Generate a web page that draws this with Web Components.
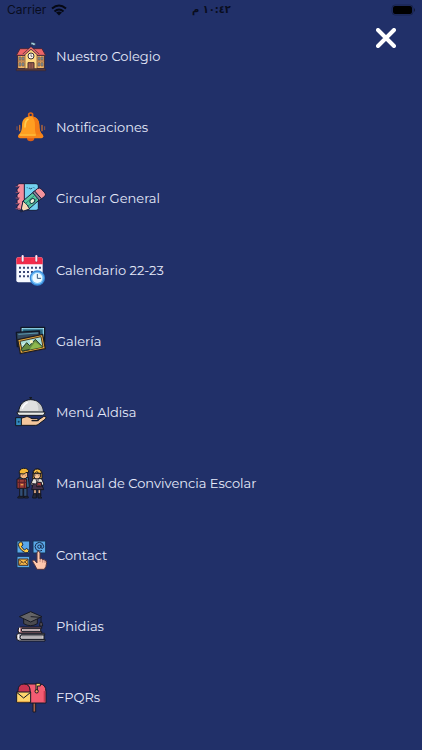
<!DOCTYPE html>
<html lang="es">
<head>
<meta charset="utf-8">
<meta name="viewport" content="width=device-width, initial-scale=1">
<title>Menú</title>
<style>
  body {
    margin: 0;
    background: #213069;
    color: #e6eafa;
    font-family: Montserrat, Inter, "DejaVu Sans", sans-serif;
  }
</style>
</head>
<body>
<side-menu>
  <status-bar slot="status" carrier="Carrier" time="١٠:٤٢ م"></status-bar>
  <menu-item icon="school">Nuestro Colegio</menu-item>
  <menu-item icon="bell">Notificaciones</menu-item>
  <menu-item icon="notebook">Circular General</menu-item>
  <menu-item icon="calendar">Calendario 22-23</menu-item>
  <menu-item icon="gallery">Galería</menu-item>
  <menu-item icon="food">Menú Aldisa</menu-item>
  <menu-item icon="students">Manual de Convivencia Escolar</menu-item>
  <menu-item icon="contact">Contact</menu-item>
  <menu-item icon="books">Phidias</menu-item>
  <menu-item icon="mailbox">FPQRs</menu-item>
</side-menu>

<script>
// every icon is drawn on a 96 x 96 grid
const icons = {
  school: `
    <path d="M48 27V7" stroke="#26283c" stroke-width="2"/>
    <path d="M48 7h6l2 2h5v7h-6l-2-2h-5z" fill="#a5d5e4" stroke="#26344f" stroke-width="2"/>
    <path d="M8 45h80v41H8z" fill="#efb568" stroke="#3b2836" stroke-width="3"/>
    <path d="M15 26h66l11 20H4z" fill="#ee6668" stroke="#46283a" stroke-width="3"/>
    <path d="M30 86V43l18-15 18 15v43z" fill="#ffd982" stroke="#5b3c35" stroke-width="2"/>
    <path d="M25 44l23-20 23 20" fill="none" stroke="#3d2737" stroke-width="7"/>
    <path d="M25 44l23-20 23 20" fill="none" stroke="#f17370" stroke-width="4"/>
    <circle cx="48" cy="48" r="9" fill="#fff8eb" stroke="#35303c" stroke-width="3"/>
    <path d="M48 43v6h4" fill="none" stroke="#35303c" stroke-width="2"/>
    <path d="M39 86V68h18v18" fill="#9b5d4f" stroke="#492c32" stroke-width="3"/>
    <path d="M48 69v16" stroke="#5d3938" stroke-width="2"/>
    <g fill="#799aa5" stroke="#7d5945" stroke-width="2">
      <path d="M12 51h6v9h-6zM21 51h6v9h-6zM12 68h6v10h-6zM21 68h6v10h-6zM69 51h6v9h-6zM78 51h6v9h-6zM69 68h6v10h-6zM78 68h6v10h-6z"/>
    </g>
    <path d="M9 63h20M67 63h20" stroke="#9c6549" stroke-width="3"/>
    <path d="M4 87h88v5H4z" fill="#68413d" stroke="#302434" stroke-width="2"/>`,
  bell: `
    <circle cx="47" cy="12" r="6" fill="none" stroke="#df6815" stroke-width="5"/>
    <path d="M36 81a11 10 0 0 0 22 0z" fill="#dc5e15"/>
    <path d="M47 16c-17 0-26 11-26 27 0 15-3 21-10 29h72c-7-8-10-14-10-29 0-16-9-27-26-27z" fill="#ff9e21"/>
    <path d="M50 16c14 2 23 12 23 27 0 15 3 21 10 29H64c-5-9-4-19-4-29 0-13-3-21-10-27z" fill="#f37b17"/>
    <path d="M39 25c-7 4-9 12-9 23" fill="none" stroke="#ffcc50" stroke-width="5" stroke-linecap="round"/>
    <rect x="9" y="70" width="76" height="12" rx="6" fill="#f78519"/>
    <path d="M15 72h46" stroke="#ffc13d" stroke-width="4" stroke-linecap="round"/>
    <path d="M14 43v16M81 43v16" stroke="#c36d34" stroke-width="4" stroke-linecap="round"/>
    <path d="M6 47v9M89 47v9" stroke="#8c5549" stroke-width="3" stroke-linecap="round"/>`,
  notebook: `
    <g stroke="#171d3e" stroke-width="3" stroke-linejoin="round">
      <path d="M24 5h39q7 0 7 7v67q0 6-7 6H24z" fill="#73d2f1"/>
      <path d="M11 5h17v79H11q-5 0-5-7v-5l6-5-6-5v-7l6-5-6-5v-7l6-5-6-5v-7l6-5-6-5z" fill="#f48c9b"/>
      <path d="M24 57l35-30 19 22-35 31-24 8z" fill="#58c7a0"/>
      <path d="M24 57l-7 33 27-9-7-12z" fill="#f6d6b3"/>
      <path d="M58 28l9-8q6-4 12 1l11 12q4 6-1 10l-10 8z" fill="#f3929c"/>
      <path d="M53 32l6-5 20 23-6 5z" fill="#8b8094"/>
    </g>
    <path d="M31 65l28-25M38 73l29-24" stroke="#258b76" stroke-width="3"/>
    <ellipse cx="52" cy="57" rx="8" ry="6" fill="#eff7de" stroke="#173947" stroke-width="3" transform="rotate(-40 52 57)"/>
    <path d="M19 79l-2 11 9-3z" fill="#182143"/>
    <path d="M37 17l1 1M57 17l1 1M43 19q4 4 8 0" fill="none" stroke="#274f70" stroke-width="3" stroke-linecap="round"/>
    <path d="M2 14h13M2 31h13M2 48h13M2 65h13M2 80h13" stroke="#9d5068" stroke-width="3"/>`,
  calendar: `
    <rect x="4" y="10" width="79" height="75" rx="6" fill="#f7f9ff"/>
    <path d="M10 10h67q6 0 6 7v14H4V17q0-7 6-7z" fill="#f22c4b"/>
    <path d="M23 8v13M64 8v13" stroke="#c22345" stroke-width="9" stroke-linecap="round"/>
    <path d="M23 6v14M64 6v14" stroke="#edf0ff" stroke-width="6" stroke-linecap="round"/>
    <g fill="#3a4776">
      <path d="M12 38h6v6h-6zM24 38h6v6h-6zM36 38h6v6h-6zM48 38h6v6h-6zM60 38h6v6h-6zM72 38h6v6h-6z"/>
      <path d="M12 51h6v6h-6zM24 51h6v6h-6zM36 51h6v6h-6zM48 51h6v6h-6zM60 51h6v6h-6z"/>
      <path d="M12 64h6v6h-6zM24 64h6v6h-6zM36 64h6v6h-6z"/>
    </g>
    <circle cx="67" cy="72" r="23" fill="#398cdb"/>
    <circle cx="67" cy="72" r="19" fill="#79c3f7"/>
    <circle cx="67" cy="72" r="15" fill="#eefaff"/>
    <path d="M67 61v12h10" fill="none" stroke="#36597f" stroke-width="3" stroke-linecap="round"/>`,
  gallery: `
    <g stroke-linejoin="round">
      <path d="M18 7h71v44H18z" fill="#b9e9f7" stroke="#101827" stroke-width="4"/>
      <path d="M23 12h61v34H23z" fill="#286078" stroke="#52a5bf" stroke-width="3"/>
      <path d="M4 22l69-4 3 43-69 4z" fill="#32485e" stroke="#101827" stroke-width="4"/>
      <path d="M10 28l59-4" stroke="#5c9bad" stroke-width="3"/>
      <path d="M8 44l75-16 8 43-75 15z" fill="#ebac3a" stroke="#211d22" stroke-width="4"/>
      <path d="M15 49l63-14 6 31-62 13z" fill="#a8ddd9" stroke="#4b381f" stroke-width="3"/>
      <path d="M19 73l16-20 9 9 17-19 21 22-60 13z" fill="#668c43" stroke="#253b29" stroke-width="3"/>
      <path d="M43 74l17-23 22 15z" fill="#8eb84d"/>
      <circle cx="49" cy="50" r="5" fill="#fff1bc"/>
      <path d="M21 60l8-5" stroke="#eefaf3" stroke-width="3"/>
    </g>`,
  food: `
    <g stroke="#131820" stroke-width="3" stroke-linejoin="round">
      <path d="M47 13V5m-4 0h8" fill="none" stroke-width="4"/>
      <path d="M11 49c1-24 16-38 36-38s36 14 37 38z" fill="#dfe0df"/>
      <path d="M61 14c15 7 22 18 23 35H70c1-16-2-26-9-35z" fill="#c6c8c9" stroke="none"/>
      <path d="M6 48h84q0 10-8 10H14q-8 0-8-10z" fill="#e8eae7"/>
      <path d="M18 67l16-5q5-1 9 2l8 4h14q6 0 5 6H50h17l18-12q6-3 8 1 1 3-3 7L70 85q-3 3-9 3H18z" fill="#f3c69c"/>
      <path d="M2 65h17v24H2z" fill="#3189bd"/>
    </g>
    <path d="M22 37q4-12 15-17" fill="none" stroke="#fff" stroke-width="4" stroke-linecap="round"/>
    <circle cx="11" cy="77" r="3" fill="#173c5c"/>`,
  students: `
    <g stroke="#151722" stroke-width="3" stroke-linejoin="round">
      <path d="M14 58h22v31H26V66h-2v23H14z" fill="#314f76"/>
      <path d="M12 31h28l3 30H11z" fill="#3d719c"/>
      <path d="M15 14h23v14q-5 8-12 8t-11-8z" fill="#f2b77e"/>
      <path d="M13 20q-2-14 12-16 16-1 16 12l-9 1-4 4z" fill="#f4b936"/>
      <path d="M6 36h29v28H6z" fill="#9c3d37"/>
      <path d="M6 46h29M13 36v28M28 36v28" stroke="#571f29" fill="none"/>
      <path d="M10 88h16v5H8zM28 88h11l1 5H28z" fill="#292c38"/>
      <path d="M56 63h8v26h-8zM69 63h8v26h-8z" fill="#e9b28a"/>
      <path d="M55 33h24l8 19-8 6H56l-9-6z" fill="#e6e3dc"/>
      <path d="M54 18q0-12 13-12t14 13v16H53z" fill="#edaa38"/>
      <path d="M57 20h19v10q-4 6-10 6t-9-6z" fill="#f7c596"/>
      <path d="M55 20q0-14 12-14t12 14q-8 0-14-6-4 6-10 6z" fill="#f8bf43"/>
      <path d="M54 51h26l6 17H50z" fill="#44324b"/>
      <path d="M65 46h14v13H65z" fill="#a63a3d"/>
      <path d="M49 48l28 9M63 37l4 12 3-12" stroke="#3b3440" fill="none"/>
      <path d="M56 80h8v13H53v-4zM69 80h8v9l4 4H69z" fill="#22273b"/>
    </g>
    <path d="M21 25h1M31 25h1M62 25h1M71 25h1" stroke="#30242c" stroke-width="3"/>
    <path d="M17 53h8" stroke="#e9a351" stroke-width="4"/>`,
  contact: `
    <g fill="#5aa8e8" stroke="#173357" stroke-width="3">
      <path d="M6 6h38v36H6zM54 6h38v36H54zM6 52h38v34H6z"/>
    </g>
    <path d="M13 10l7-2 4 10-5 4q4 8 10 11l5-5 8 6-3 7q-8 3-18-6T10 17z" fill="#ffcc46" stroke="#172543" stroke-width="3" stroke-linejoin="round"/>
    <circle cx="73" cy="23" r="5" fill="none" stroke="#172a4c" stroke-width="3"/>
    <path d="M78 17v8q1 4 4 3 4-1 4-6-1-11-13-12-12 1-13 13 1 12 13 13 4 0 8-2" fill="none" stroke="#172a4c" stroke-width="3"/>
    <path d="M11 60h28v19H11z" fill="#f8b945" stroke="#43342d" stroke-width="3"/>
    <path d="M11 61l14 11 14-11M11 78l10-10M39 78L29 68" fill="none" stroke="#61442a" stroke-width="3"/>
    <path d="M66 91l-8-15q-8-10-4-13 4-2 10 7l2 2V42q0-5 4-5t5 5v18q6-3 8 2 6-2 7 3 6-2 5 6-1 13-7 20z" fill="#ffc7ac" stroke="#53343e" stroke-width="3" stroke-linejoin="round"/>
    <path d="M75 60v9M83 63v8M90 66v6" stroke="#a56563" stroke-width="2"/>`,
  books: `
    <g stroke="#171923" stroke-width="3" stroke-linejoin="round">
      <path d="M26 25v16q21 12 41 0V25z" fill="#4b4b50"/>
      <path d="M13 20L47 5l34 15-34 16z" fill="#646467"/>
      <path d="M47 20l31 2v16" fill="none" stroke-width="3"/>
      <path d="M75 37h6l2 11h-9z" fill="#57525d"/>
      <path d="M17 51h63v4H22v10h58v5H17q-8 0-8-9t8-10z" fill="#b6777f"/>
      <path d="M21 55h56v10H21q-5-5 0-10z" fill="#cfb9bb"/>
      <path d="M14 70h75v5H18v13h72v5H14q-10 0-10-12t10-11z" fill="#aaa8b2"/>
      <path d="M18 75h69v13H18q-6-6 0-13z" fill="#d6d3d4"/>
    </g>
    <path d="M24 60h49M20 80h62M20 84h62" stroke="#918d94" stroke-width="2"/>
    <path d="M14 54v11M10 75v12" stroke="#fff" stroke-width="3" stroke-linecap="round"/>`,
  mailbox: `
    <g stroke="#171929" stroke-width="3" stroke-linejoin="round">
      <path d="M54 65h8v28h-8z" fill="#a56346"/>
      <path d="M27 9h46q20 0 20 23v34H45V33Q45 9 27 9z" fill="#f35c72"/>
      <path d="M9 65V29Q9 9 27 9t18 20v36z" fill="#c93451"/>
      <path d="M5 33h42v31H5z" fill="#ffd66c"/>
      <path d="M5 34l21 17 21-17" fill="none"/>
      <path d="M63 28V7h13v8h-9v13" fill="#ffd36a"/>
      <circle cx="65" cy="31" r="5" fill="#f8a45f"/>
    </g>
    <path d="M7 62h36" stroke="#eca945" stroke-width="3"/>
    <path d="M88 30v32" stroke="#cb3852" stroke-width="4"/>`
};

class MenuIcon extends HTMLElement {

  constructor() {
    super();
    this.shadowDOM = this.attachShadow({mode: "open"});
  }

  connectedCallback() {
    this.render();
  }

  render() {
    this.shadowDOM.innerHTML = `
      <style>
        :host {
          display: block;
          flex: none;
          width: 32px;
          height: 32px;
        }

        svg {
          display: block;
          width: 100%;
          height: 100%;
        }
      </style>
      <svg viewBox="0 0 96 96" aria-hidden="true">${icons[this.getAttribute("name")]}</svg>
    `;
  }
}

customElements.define("menu-icon", MenuIcon);

class MenuItem extends HTMLElement {

  constructor() {
    super();
    this.shadowDOM = this.attachShadow({mode: "open"});
  }

  connectedCallback() {
    this.setAttribute("role", "listitem");
    this.render();
  }

  render() {
    const icon = this.getAttribute("icon");
    this.shadowDOM.innerHTML = `
      <style>
        :host {
          display: grid;
        }

        a {
          display: flex;
          align-items: center;
          gap: 9px;
          padding: 0 15px;
          color: inherit;
          font-size: 13px;
          line-height: 20px;
          text-decoration: none;
        }
      </style>
      <a href="#${icon}">
        <menu-icon name="${icon}"></menu-icon>
        <span><slot></slot></span>
      </a>
    `;
  }
}

customElements.define("menu-item", MenuItem);

class StatusBar extends HTMLElement {

  constructor() {
    super();
    this.shadowDOM = this.attachShadow({mode: "open"});
  }

  connectedCallback() {
    this.render();
  }

  render() {
    this.shadowDOM.innerHTML = `
      <style>
        :host {
          display: grid;
          grid-template-columns: 1fr auto 1fr;
          align-items: center;
          height: 20px;
          padding: 0 6px 0 7px;
          color: #090d1e;
          font-size: 12px;
          line-height: 20px;
        }

        .carrier {
          display: flex;
          align-items: center;
          gap: 5px;
          font-family: Inter, sans-serif;
        }

        .time {
          font-family: "DejaVu Sans Condensed", "DejaVu Sans", sans-serif;
          font-size: 11px;
          font-weight: bold;
        }

        .battery {
          justify-self: end;
        }

        svg {
          display: block;
        }
      </style>
      <div class="carrier">
        <span>${this.getAttribute("carrier")}</span>
        <svg width="16" height="12" viewBox="0 0 32 24" aria-hidden="true">
          <path d="M2 9Q16-3 30 9M7 15Q16 7 25 15" fill="none" stroke="#050814" stroke-width="4"/>
          <path d="M16 23L10 17Q16 13 22 17z" fill="#050814"/>
        </svg>
      </div>
      <div class="time" dir="rtl">${this.getAttribute("time")}</div>
      <svg class="battery" width="25" height="12" viewBox="0 0 25 12" aria-hidden="true">
        <rect x="1" y="1" width="21" height="10" rx="3" fill="none" stroke="#18234f"/>
        <rect x="2" y="2" width="19" height="8" rx="2" fill="#000"/>
        <path d="M23 4q2 2 0 4z" fill="#101936"/>
      </svg>
    `;
  }
}

customElements.define("status-bar", StatusBar);

class CloseButton extends HTMLElement {

  constructor() {
    super();
    this.shadowDOM = this.attachShadow({mode: "open"});
  }

  connectedCallback() {
    this.render();
  }

  render() {
    this.shadowDOM.innerHTML = `
      <style>
        :host {
          display: block;
        }

        button {
          display: block;
          padding: 8px;
          border: 0;
          background: none;
          color: white;
          cursor: pointer;
        }

        svg {
          display: block;
        }
      </style>
      <button type="button" aria-label="Cerrar">
        <svg width="20" height="20" viewBox="0 0 20 20" aria-hidden="true">
          <path d="M2 2l16 16M18 2L2 18" stroke="currentColor" stroke-width="4" stroke-linecap="round"/>
        </svg>
      </button>
    `;
  }
}

customElements.define("close-button", CloseButton);

class SideMenu extends HTMLElement {

  constructor() {
    super();
    this.shadowDOM = this.attachShadow({mode: "open"});
  }

  connectedCallback() {
    this.render();
  }

  render() {
    this.shadowDOM.innerHTML = `
      <style>
        :host {
          position: relative;
          display: flex;
          flex-direction: column;
          box-sizing: border-box;
          min-height: 100vh;
          padding-bottom: 17px;
        }

        /* the rows share the height that is left */
        nav {
          flex: 1;
          display: grid;
        }

        .list {
          display: grid;
          grid-auto-rows: minmax(48px, 1fr);
        }

        close-button {
          position: absolute;
          top: 20px;
          right: 18px;
        }
      </style>
      <slot name="status"></slot>
      <nav>
        <div class="list" role="list"><slot></slot></div>
      </nav>
      <close-button></close-button>
    `;
  }
}

customElements.define("side-menu", SideMenu);
</script>
</body>
</html>
